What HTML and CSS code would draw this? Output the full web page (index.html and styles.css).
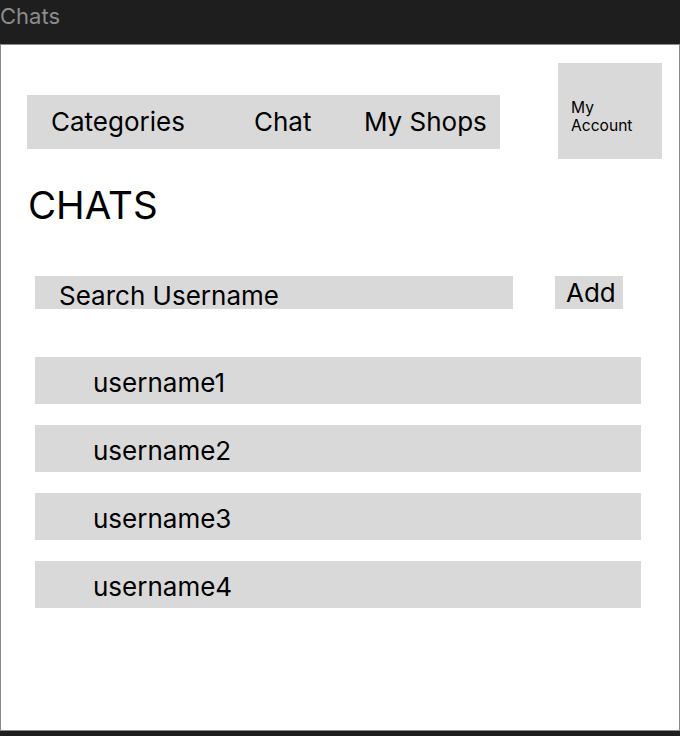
FILE: index.html
```html
<!DOCTYPE html>
<html>
<head>
<meta charset="utf-8">
<link rel="stylesheet" href="styles.css">
</head>
<body>
<div class="titlebar">Chats</div>
<div class="frame">
  <div class="header">
    <nav class="nav">
      <span class="nav-item">Categories</span>
      <span class="nav-item">Chat</span>
      <span class="nav-item">My Shops</span>
    </nav>
    <div class="account">My<br>Account</div>
  </div>
  <h1 class="title">CHATS</h1>
  <div class="search-row">
    <div class="search">Search Username</div>
    <div class="add">Add</div>
  </div>
  <div class="list">
    <div class="row">username1</div>
    <div class="row">username2</div>
    <div class="row">username3</div>
    <div class="row">username4</div>
  </div>
</div>
</body>
</html>
```
FILE: styles.css
```css
* { box-sizing: border-box; }
html, body { margin: 0; padding: 0; }
body {
  background: #1e1e1e;
  font-family: Inter, "Noto Sans", sans-serif;
  color: #000;
  width: 680px;
  height: 736px;
  overflow: hidden;
}
.titlebar {
  height: 44px;
  color: #8c8c8c;
  font-size: 22px;
  line-height: 32px;
  padding-left: 0;
}
.frame {
  height: 687px;
  background: #fff;
  border: 1px solid #8a8a8a;
}
.header {
  display: flex;
  align-items: flex-start;
  padding: 18px 0 0 26px;
}
.nav {
  margin-top: 32px;
  width: 473px;
  height: 54px;
  background: #d9d9d9;
  display: grid;
  grid-template-columns: 203px 110px auto;
  align-items: center;
  padding: 0 0 1px 24px;
  font-size: 26px;
}
.account {
  margin-left: 58px;
  width: 104px;
  height: 96px;
  background: #d9d9d9;
  font-size: 15.6px;
  line-height: 18px;
  padding: 36px 0 0 13px;
}
.title {
  margin: 24px 0 0 27px;
  font-weight: 400;
  font-size: 38.5px;
  line-height: 44px;
}
.search-row {
  display: flex;
  margin: 49px 0 0 34px;
}
.search, .add {
  height: 33px;
  background: #d9d9d9;
  font-size: 26px;
  line-height: 40px;
  white-space: nowrap;
}
.search {
  width: 478px;
  padding-left: 24px;
}
.add {
  margin-left: 42px;
  width: 68px;
  padding-left: 11px;
  line-height: 34px;
}
.list {
  display: flex;
  flex-direction: column;
  gap: 21px;
  margin: 48px 0 0 34px;
}
.row {
  width: 606px;
  height: 47px;
  background: #d9d9d9;
  font-size: 26px;
  line-height: 51px;
  padding-left: 58px;
}
```
